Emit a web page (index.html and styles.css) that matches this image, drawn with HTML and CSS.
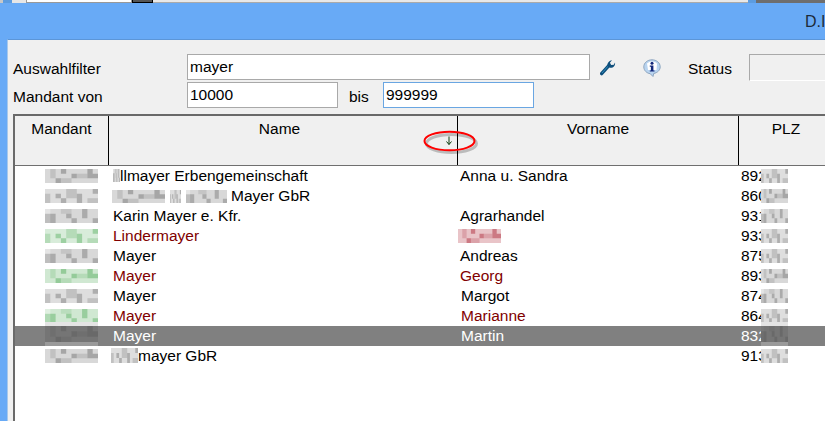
FILE: index.html
```html
<!DOCTYPE html>
<html lang="de">
<head>
<meta charset="utf-8">
<title>Auswahl</title>
<link rel="stylesheet" href="styles.css">
</head>
<body>
<svg class="defs" width="0" height="0" aria-hidden="true">
  <symbol id="m1" viewBox="0 0 10 3" preserveAspectRatio="none">
    <path opacity=".3" d="M0 0h10v3H0z"/>
    <path opacity=".25" d="M1 0h1v2H1zM6 1h2v1H6zM3 2h2v1H3z"/>
    <path opacity=".55" d="M3 0h1v1H3zM5 1h1v1H5zM8 0h1v2H8zM2 2h1v1H2zM9 1h1v1H9z"/>
  </symbol>
  <symbol id="m2" viewBox="0 0 10 3" preserveAspectRatio="none">
    <path opacity=".25" d="M0 0h10v3H0z"/>
    <path opacity=".3" d="M4 0h2v2H4zM0 1h1v2H0zM8 2h2v1H8z"/>
    <path opacity=".5" d="M2 1h1v1H2zM6 1h1v2H6zM9 0h1v1H9zM3 2h1v1H3z"/>
  </symbol>
  <symbol id="m3" viewBox="0 0 10 3" preserveAspectRatio="none">
    <path opacity=".3" d="M1 0h9v3H1z"/>
    <path opacity=".5" d="M0 1h2v2H0zM4 1h1v1H4zM7 0h1v2H7zM5 2h1v1H5zM9 2h1v1H9z"/>
    <path opacity=".2" d="M0 0h1v1H0zM3 0h2v1H3z"/>
  </symbol>
</svg>
<div class="topstrip">
  <span class="seg seg-a"></span><span class="seg seg-b"></span><span class="seg seg-c"></span>
  <span class="seg seg-d"></span><span class="seg seg-e"></span><span class="seg seg-f"></span>
  <span class="seg seg-g"></span><span class="seg seg-h"></span>
</div>
<header class="titlebar"><span class="title">D.I</span></header>
<main class="panel">
  <div class="formrow">
    <label class="label label-wide">Auswahlfilter</label>
    <input class="field field-filter" value="mayer" readonly>
    <button class="iconbtn wrench" aria-label="Einstellungen">
      <svg width="16" height="17" viewBox="0 0 16 17">
        <path d="M1.6 14.6 8.6 6.8" stroke="#0f4f7c" stroke-width="3.4" stroke-linecap="round" fill="none"/>
        <path d="M2 14 8.6 6.6" stroke="#2f8fc0" stroke-width="1" fill="none"/>
        <path d="M7.6 7.4C6.9 4.6 8.6 1.6 12 1.2L9.9 3.800 11.200 6 13.800 5.800 15 3.400C15.600 6.400 13.200 9.200 10 8.800z" fill="#0f4f7c"/>
      </svg>
    </button>
    <button class="iconbtn info" aria-label="Information">
      <svg width="18" height="18" viewBox="0 0 18 18">
        <path d="M9 .8C4.500.8.800 3.800.800 7.900c0 3.600 2.900 6.300 6.400 6.800L10 17.500l.7-3c3.700-.7 6.500-3.300 6.500-6.600C17.200 3.800 13.500.8 9 .8z" fill="#b9d4f0" stroke="#8ea6bf" stroke-width="1"/>
        <path d="M4 4.500C5.500 3 7 2.400 9 2.400s4 .8 5 2.400L13.500 11 5 11z" fill="#fff"/>
        <circle cx="9" cy="4.300" r="1.500" fill="#12277a"/>
        <path d="M6.800 6.600h3.600v4.800h1.100v1.200H6.800v-1.200h1.100V7.800H6.800z" fill="#12277a"/>
      </svg>
    </button>
    <span class="label label-status">Status</span>
    <input class="field field-status" readonly>
  </div>
  <div class="formrow">
    <label class="label label-wide">Mandant von</label>
    <input class="field field-from" value="10000" readonly>
    <span class="label label-bis">bis</span>
    <input class="field field-to" value="999999" readonly>
  </div>
  <section class="table">
    <div class="head">
      <div class="hcell">Mandant</div>
      <div class="hcell hcell-name">Name
        <span class="sortmark">
          <svg width="56" height="26" viewBox="0 0 56 26">
            <ellipse class="halo" cx="28.500" cy="13.500" rx="25" ry="9"/>
            <ellipse class="ring" cx="26.500" cy="11" rx="25" ry="9.300"/>
            <path class="arrow" d="M26 6.500v8M23.500 11.500 26 14.500l2.500-3"/>
          </svg>
        </span>
      </div>
      <div class="hcell">Vorname</div>
      <div class="hcell hcell-last">PLZ</div>
    </div>
    <div class="body">
      <div class="row">
        <div class="cell"><svg class="mos mos-id gray"><use href="#m1"/></svg></div>
        <div class="cell cell-name"><svg class="mos mos-pre gray"><use href="#m3"/></svg>llmayer Erbengemeinschaft</div>
        <div class="cell cell-first">Anna u. Sandra</div>
        <div class="cell cell-plz"><span class="digits">892</span><svg class="mos mos-plz gray"><use href="#m2"/></svg></div>
      </div>
      <div class="row">
        <div class="cell"><svg class="mos mos-id gray"><use href="#m2"/></svg></div>
        <div class="cell cell-name"><svg class="mos mos-w1 gray"><use href="#m1"/></svg><svg class="mos mos-w2 gray"><use href="#m2"/></svg><svg class="mos mos-w3 gray"><use href="#m3"/></svg>Mayer GbR</div>
        <div class="cell cell-first"></div>
        <div class="cell cell-plz"><span class="digits">860</span><svg class="mos mos-plz gray"><use href="#m1"/></svg></div>
      </div>
      <div class="row">
        <div class="cell"><svg class="mos mos-id gray"><use href="#m3"/></svg></div>
        <div class="cell cell-name">Karin Mayer e. Kfr.</div>
        <div class="cell cell-first">Agrarhandel</div>
        <div class="cell cell-plz"><span class="digits">931</span><svg class="mos mos-plz gray"><use href="#m3"/></svg></div>
      </div>
      <div class="row row-red">
        <div class="cell"><svg class="mos mos-id green"><use href="#m2"/></svg></div>
        <div class="cell cell-name">Lindermayer</div>
        <div class="cell cell-first"><svg class="mos mos-first rose"><use href="#m1"/></svg></div>
        <div class="cell cell-plz"><span class="digits">933</span><svg class="mos mos-plz gray"><use href="#m2"/></svg></div>
      </div>
      <div class="row">
        <div class="cell"><svg class="mos mos-id gray"><use href="#m3"/></svg></div>
        <div class="cell cell-name">Mayer</div>
        <div class="cell cell-first">Andreas</div>
        <div class="cell cell-plz"><span class="digits">875</span><svg class="mos mos-plz gray"><use href="#m2"/></svg></div>
      </div>
      <div class="row row-red">
        <div class="cell"><svg class="mos mos-id green"><use href="#m1"/></svg></div>
        <div class="cell cell-name">Mayer</div>
        <div class="cell cell-first">Georg</div>
        <div class="cell cell-plz"><span class="digits">893</span><svg class="mos mos-plz gray"><use href="#m1"/></svg></div>
      </div>
      <div class="row">
        <div class="cell"><svg class="mos mos-id gray"><use href="#m2"/></svg></div>
        <div class="cell cell-name">Mayer</div>
        <div class="cell cell-first cell-nudge">Margot</div>
        <div class="cell cell-plz"><span class="digits">874</span><svg class="mos mos-plz gray"><use href="#m3"/></svg></div>
      </div>
      <div class="row row-red">
        <div class="cell"><svg class="mos mos-id green"><use href="#m3"/></svg></div>
        <div class="cell cell-name">Mayer</div>
        <div class="cell cell-first cell-nudge">Marianne</div>
        <div class="cell cell-plz"><span class="digits">864</span><svg class="mos mos-plz gray"><use href="#m2"/></svg></div>
      </div>
      <div class="row row-sel">
        <div class="cell"><svg class="mos mos-sel mos-id-sel dark"><use href="#m1"/></svg></div>
        <div class="cell cell-name">Mayer</div>
        <div class="cell cell-first cell-nudge">Martin</div>
        <div class="cell cell-plz"><span class="digits">832</span><svg class="mos mos-sel mos-plz-sel dark"><use href="#m3"/></svg></div>
      </div>
      <div class="row">
        <div class="cell"><svg class="mos mos-id gray"><use href="#m1"/></svg></div>
        <div class="cell cell-name"><svg class="mos mos-mid gray"><use href="#m2"/></svg>mayer GbR</div>
        <div class="cell cell-first"></div>
        <div class="cell cell-plz"><span class="digits">913</span><svg class="mos mos-plz gray"><use href="#m2"/></svg></div>
      </div>
    </div>
  </section>
</main>
</body>
</html>
```

FILE: styles.css
```css
* { box-sizing: border-box; }

html, body {
  margin: 0;
  height: 421px;
  overflow: hidden;
}

body {
  display: flex;
  flex-direction: column;
  background: #68aaf6;
  font-family: "Liberation Sans", Arial, sans-serif;
  font-size: 15.5px;
  color: #000;
}

.defs { display: block; height: 0; }

.topstrip {
  display: flex;
  height: 3px;
  flex: none;
}
.seg { display: block; height: 100%; }
.seg-a { width: 3px; background: #c8c8c8; }
.seg-b { width: 9px; background: #5c9ce0; }
.seg-c { width: 14px; background: #e6e6e6; }
.seg-d { width: 106px; background: #fff; border-bottom: 1px solid #999; border-left: 1px solid #999; border-right: 1px solid #999; }
.seg-e { width: 21px; background: #555; border: 1px solid #000; border-top: 0; }
.seg-f { width: 595px; background: #e8e8e8; border-bottom: 1px solid #aaa; }
.seg-g { width: 8px; background: #5c9ce0; }
.seg-h { flex: 1; background: #6e6e6e; }

.titlebar {
  flex: none;
  height: 36px;
  display: flex;
  align-items: center;
  padding: 2px 0 0 805px;
  white-space: nowrap;
  font-size: 16px;
  color: #1d2b3a;
}
.title { display: block; }

.panel {
  flex: 1;
  min-height: 0;
  margin-left: 7px;
  padding: 14px 0 0 5px;
  background: #f0f0f0;
  border-top: 1px solid #5c96d8;
  border-left: 1px solid #a8c8ea;
  display: flex;
  flex-direction: column;
  overflow: hidden;
}

.formrow {
  display: flex;
  align-items: flex-start;
  height: 26px;
  margin-bottom: 2px;
  flex: none;
}

.label {
  display: block;
  line-height: 17px;
  padding-top: 6px;
  white-space: nowrap;
}
.label-wide { width: 174px; flex: none; }
.label-status { margin-left: 27px; width: 61px; flex: none; }
.label-bis { margin-left: 11px; width: 34px; flex: none; }

.field {
  display: block;
  flex: none;
  height: 26px;
  padding: 0 2px 1px;
  font: inherit;
  color: #000;
  background: #fff;
  border: 1px solid #a9a9a9;
  border-radius: 0;
  outline: 0;
}
.field-filter { width: 403px; }
.field-from { width: 151px; }
.field-to { width: 151px; border-color: #6aa6e2; }
.field-status {
  width: 90px;
  height: 27px;
  background: #f0f0f0;
  border-right: 0;
  border-bottom-color: #fff;
}

.iconbtn {
  display: block;
  flex: none;
  padding: 0;
  border: 0;
  background: none;
  height: 20px;
}
.wrench { margin: 5px 0 0 10px; width: 16px; }
.info { margin: 5px 0 0 27px; width: 18px; }

.table {
  flex: 1;
  min-height: 0;
  margin-top: 4px;
  width: 900px;
  border-left: 2px solid #6a6a6a;
  display: flex;
  flex-direction: column;
  background: #fff;
}

.head {
  flex: none;
  height: 52px;
  display: grid;
  grid-template-columns: 94px 349px 281px 94px;
  background: #f0f0f0;
  border-top: 2px solid #696969;
  border-bottom: 1px solid #6f6f6f;
}

.hcell {
  position: relative;
  text-align: center;
  padding-top: 4px;
  line-height: 17px;
  border-right: 1px solid #000;
}
.hcell-name { padding-right: 7px; }
.hcell-last { border-right: 0; }

.sortmark {
  position: absolute;
  left: 314px;
  top: 14px;
  width: 56px;
  height: 26px;
  display: block;
}
.sortmark svg { display: block; }
.halo { fill: none; stroke: #000; stroke-opacity: .22; stroke-width: 3; }
.ring { fill: none; stroke: #f00; stroke-width: 2; }
.arrow { fill: none; stroke: #0e3c0e; stroke-width: 1; }

.body {
  flex: 1;
  min-height: 0;
}

.row {
  display: grid;
  grid-template-columns: 94px 349px 281px 94px;
  height: 20px;
  line-height: 20px;
  white-space: nowrap;
}
.row-red { color: #800000; }
.row-sel { background: #808080; color: #fff; }

.cell {
  position: relative;
  display: flex;
  align-items: flex-start;
  min-width: 0;
}
.cell-name { padding-left: 4px; }
.cell-first { padding-left: 2px; }
.cell-nudge { padding-left: 3px; }
.cell-plz { padding-left: 2px; color: #000; }
.row-sel .cell-plz { color: #fff; }

.digits {
  display: block;
  flex: none;
}

.mos { display: block; flex: none; }
.gray { fill: #7d7d7d; }
.green { fill: #62b36a; }
.rose { fill: #b53c4a; }
.dark { fill: #5e5e5e; }

.mos-id { width: 53px; height: 14px; margin: 3px 0 0 30px; }
.mos-pre { width: 7px; height: 13px; margin: 3px 0 0 0; }
.mos-w1 { width: 53px; height: 13px; margin: 4px 0 0 -1px; }
.mos-w2 { width: 11px; height: 13px; margin: 4px 0 0 5px; }
.mos-w3 { width: 41px; height: 13px; margin: 4px 4px 0 5px; }
.mos-mid { width: 27px; height: 15px; margin: 2px 0 0 -2px; }
.mos-first { width: 43px; height: 14px; margin: 3px 0 0 -2px; }
.mos-plz { width: 27px; height: 14px; margin: 3px 0 0 -6px; background: #fff; }
.mos-sel {
  height: 24px;
  margin-top: -4px;
  padding: 4px 0;
  background: linear-gradient(#e4e4e4 0 4px, #808080 4px 20px, #9a9a9a 20px);
}
.mos-id-sel { width: 53px; margin-left: 30px; }
.mos-plz-sel { width: 27px; margin-left: -6px; }
```
